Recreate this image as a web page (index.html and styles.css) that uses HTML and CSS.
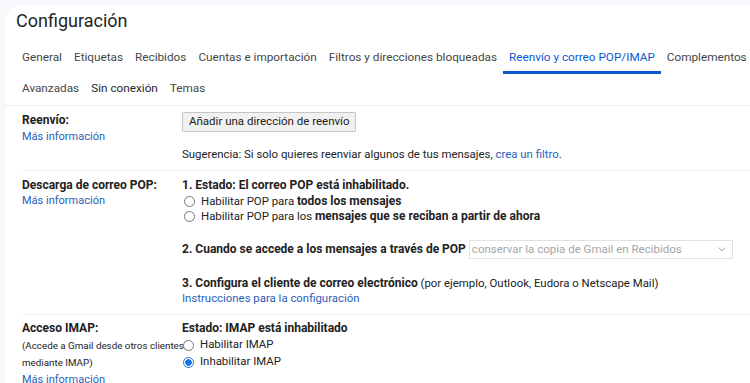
FILE: index.html
```html
<!DOCTYPE html>
<html lang="es">
<head>
<meta charset="utf-8">
<title>Configuración</title>
<link rel="stylesheet" href="styles.css">
</head>
<body>
<div class="panel">
  <h1 class="title">Configuración</h1>
  <nav class="tabs">
    <div class="tab-row">
      <span class="tab">General</span>
      <span class="tab">Etiquetas</span>
      <span class="tab">Recibidos</span>
      <span class="tab">Cuentas e importación</span>
      <span class="tab">Filtros y direcciones bloqueadas</span>
      <span class="tab active">Reenvío y correo POP/IMAP</span>
      <span class="tab">Complementos</span>
    </div>
    <div class="tab-row">
      <span class="tab">Avanzadas</span>
      <span class="tab strong">Sin conexión</span>
      <span class="tab">Temas</span>
    </div>
  </nav>

  <div class="content">
    <section class="setting s-fwd">
      <div class="label">
        <div class="name">Reenvío:</div>
        <a class="link more">Más información</a>
      </div>
      <div class="value">
        <button class="btn">Añadir una dirección de reenvío</button>
        <p class="hint">Sugerencia: Si solo quieres reenviar algunos de tus mensajes, <a class="link">crea un filtro</a>.</p>
      </div>
    </section>

    <section class="setting s-pop">
      <div class="label">
        <div class="name">Descarga de correo POP:</div>
        <a class="link more">Más información</a>
      </div>
      <div class="value">
        <div class="bold first">1. Estado: El correo POP está inhabilitado.</div>
        <label class="radio-line"><span class="radio"></span><span>Habilitar POP para <b>todos los mensajes</b></span></label>
        <label class="radio-line"><span class="radio"></span><span>Habilitar POP para los <b>mensajes que se reciban a partir de ahora</b></span></label>
        <div class="when">
          <span class="bold">2. Cuando se accede a los mensajes a través de POP</span>
          <div class="select">
            <span>conservar la copia de Gmail en Recibidos</span>
            <svg class="chev" width="8" height="5" viewBox="0 0 8 5"><path d="M0.5 0.5 L4 4 L7.5 0.5" fill="none" stroke="#a8a8a8" stroke-width="1"/></svg>
          </div>
        </div>
        <div class="step3"><span class="bold">3. Configura el cliente de correo electrónico</span> (por ejemplo, Outlook, Eudora o Netscape Mail)</div>
        <a class="link">Instrucciones para la configuración</a>
      </div>
    </section>

    <section class="setting s-imap">
      <div class="label">
        <div class="name">Acceso IMAP:</div>
        <div class="small">(Accede a Gmail desde otros clientes</div>
        <div class="small">mediante IMAP)</div>
        <a class="link more">Más información</a>
      </div>
      <div class="value">
        <div class="bold">Estado: IMAP está inhabilitado</div>
        <label class="radio-line r2"><span class="radio"></span><span>Habilitar IMAP</span></label>
        <label class="radio-line r2"><span class="radio checked"></span><span>Inhabilitar IMAP</span></label>
      </div>
    </section>
  </div>
</div>
</body>
</html>
```

FILE: styles.css
```css
html, body {
  margin: 0;
  padding: 0;
  background: #f6f8fc;
  overflow: hidden;
}
body {
  font-family: Roboto, "Liberation Sans", Arial, sans-serif;
  color: #222;
  font-size: 11.4px;
}
.panel {
  margin: 5px 0 0 5px;
  background: #fff;
  border-top-left-radius: 16px;
  min-height: 400px;
}
.title {
  margin: 0;
  padding-left: 11px;
  height: 32px;
  line-height: 32px;
  font-family: Roboto, "Open Sans", sans-serif;
  font-weight: 400;
  font-size: 18px;
  color: #1f1f1f;
}
.tabs {
  padding: 6px 0 0 11px;
  border-bottom: 1px solid #eceef1;
}
.tab-row {
  display: flex;
  white-space: nowrap;
}
.tab {
  padding: 0 6px;
  line-height: 28px;
  border-bottom: 3px solid transparent;
  font-size: 11.75px;
  color: #444746;
}
.tab.strong { color: #1f1f1f; }
.tab.active {
  color: #0b57d0;
  border-bottom-color: #0b57d0;
}
.content {
  padding-left: 17px;
}
.setting {
  display: grid;
  grid-template-columns: 160px 1fr;
  border-bottom: 1px solid #eceef1;
  line-height: 15.5px;
}
.s-fwd { padding: 7px 0 7px; }
.s-pop { padding: 7px 0 8px; }
.s-imap { padding: 6px 0 0; border-bottom: none; }
.name, .bold, b {
  font-weight: 700;
  font-size: 12px;
  color: #222;
}
.bold.first { height: 16px; }
.link {
  color: #2a5fb8;
  text-decoration: none;
  display: block;
}
.link.more { font-size: 11px; }
.hint .link { display: inline; }
.small {
  font-size: 9.8px;
  line-height: 17px;
  white-space: nowrap;
}
.s-imap .label .link { line-height: 17px; }
.btn {
  display: block;
  font: inherit;
  font-size: 11.5px;
  color: #222;
  height: 20px;
  margin: -1px 0 0;
  padding: 0 6px;
  background: #f1f1f1;
  border: 1px solid #c6c6c6;
  border-radius: 1px;
}
.hint {
  margin: 15px 0 0;
}
.radio-line {
  display: flex;
  align-items: center;
  height: 15.5px;
  margin-left: 2px;
}
.radio-line.r2 { height: 17px; margin-left: 1px; }
.radio {
  border: 1px solid #777;
  border-radius: 50%;
  margin-right: 6px;
  flex: none;
  box-sizing: border-box;
  width: 11px;
  height: 11px;
}
.radio.checked {
  border-color: #1a73e8;
  background: radial-gradient(circle, #1a73e8 0 3px, #fff 3.5px);
}
.when {
  display: flex;
  align-items: center;
  margin-top: 15.5px;
  height: 19px;
}
.select {
  display: flex;
  align-items: center;
  justify-content: space-between;
  margin-left: 3px;
  width: 264px;
  height: 19px;
  box-sizing: border-box;
  border: 1px solid #e2e2e2;
  padding: 0 6px 0 2px;
  color: #a6a6a6;
  font-size: 11.5px;
}
.chev { flex: none; }
.step3 { margin-top: 16.5px; height: 15px; }
```
